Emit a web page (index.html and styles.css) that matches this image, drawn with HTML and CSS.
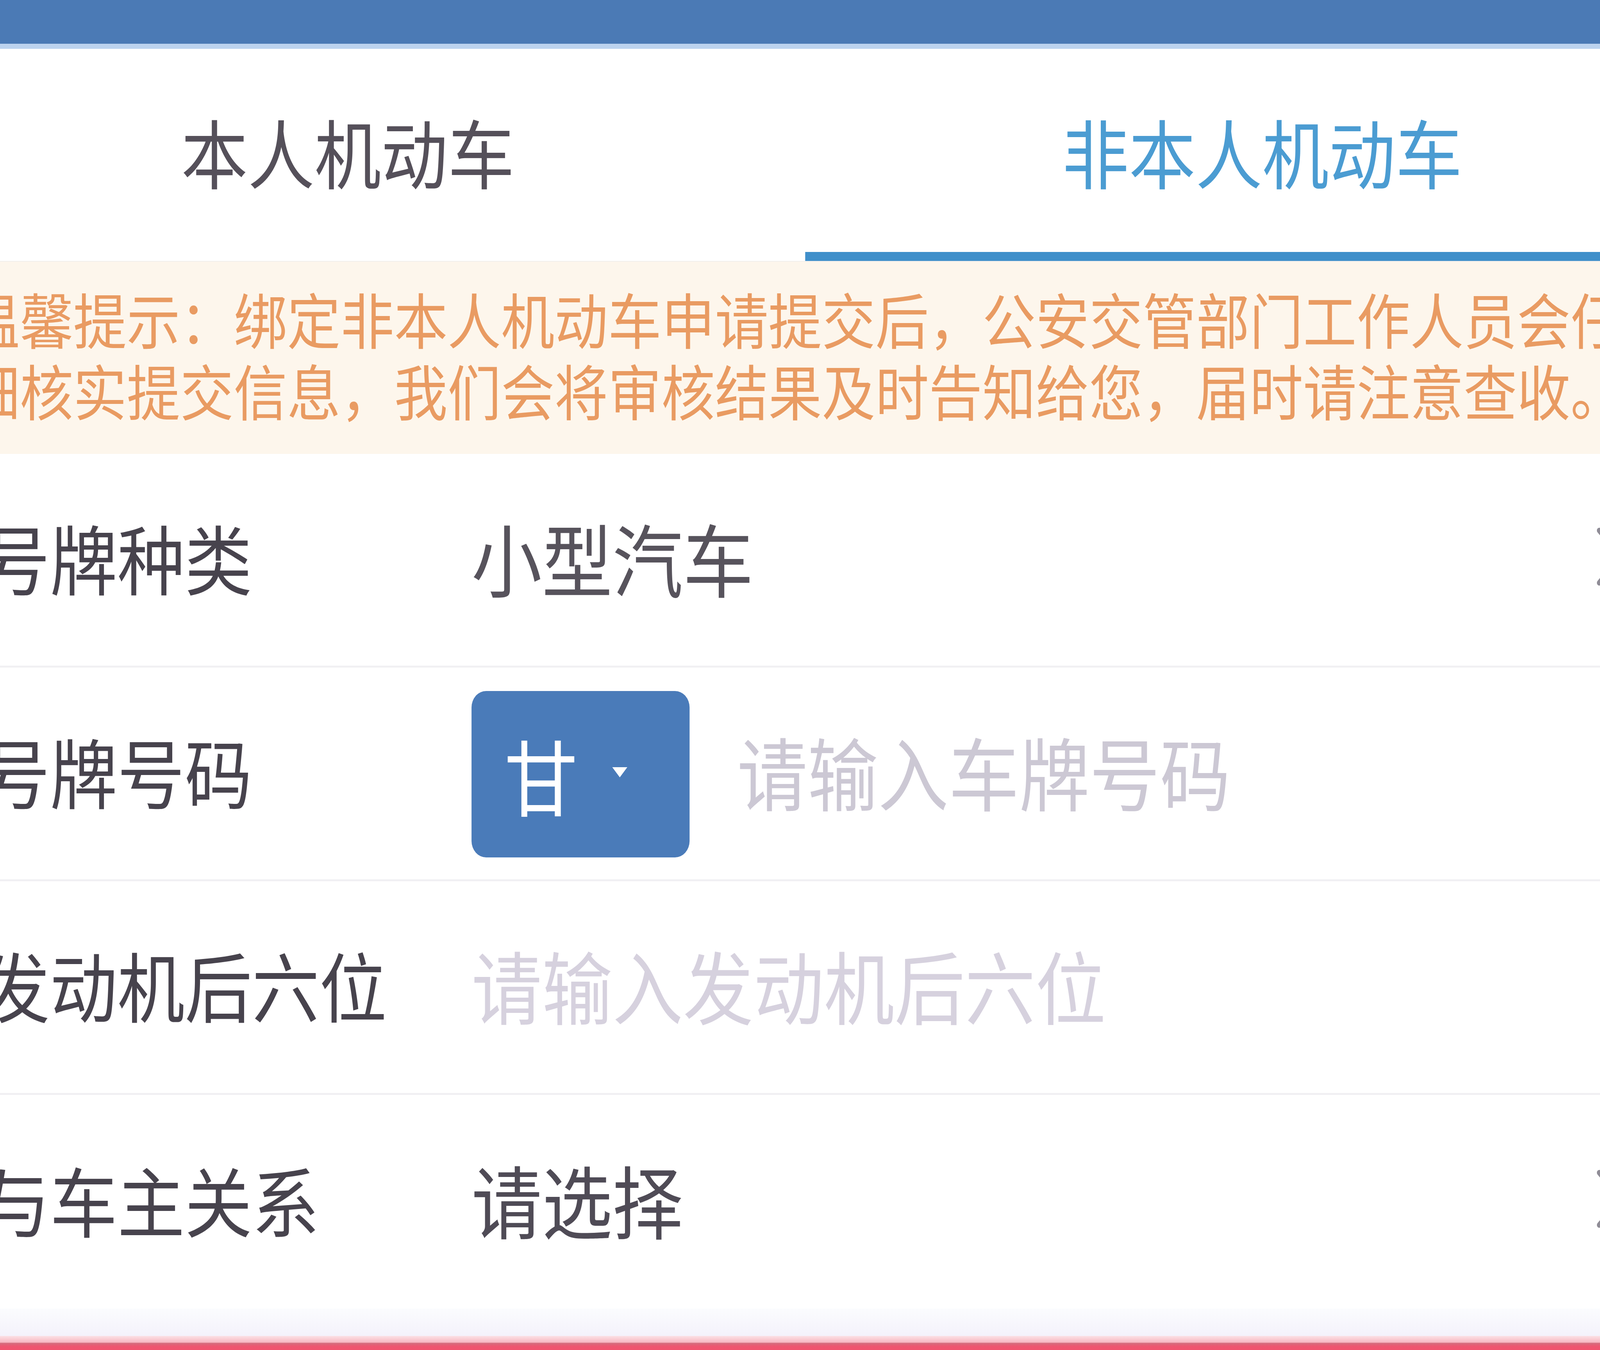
FILE: index.html
```html
<!DOCTYPE html>
<html lang="zh-CN">
<head>
<meta charset="utf-8">
<title>绑定机动车</title>
<link rel="stylesheet" href="styles.css">
</head>
<body>
<div class="screen">
  <div class="frame">
    <div class="app">
      <header class="topbar"></header>
      <nav class="tabs">
        <div class="tab">本人机动车</div>
        <div class="tab active">非本人机动车</div>
      </nav>
      <div class="notice">温馨提示：绑定非本人机动车申请提交后，公安交管部门工作人员会仔细核实提交信息，我们会将审核结果及时告知给您，届时请注意查收。</div>
      <div class="form">
        <div class="row">
          <div class="label">号牌种类</div>
          <div class="value">小型汽车</div>
          <svg class="chev" viewBox="0 0 80 150"><path d="M8 8 L70 75 L8 142" fill="none" stroke="#8f8c96" stroke-width="14" stroke-linecap="round" stroke-linejoin="round"/></svg>
        </div>
        <div class="row">
          <div class="label">号牌号码</div>
          <div class="value plate">
            <div class="prov">
              <span class="prov-name">甘</span>
              <svg class="caret" viewBox="0 0 50 30"><path d="M0 0 H50 L25 30 Z" fill="#ffffff"/></svg>
            </div>
            <span class="ph">请输入车牌号码</span>
          </div>
          <span class="chev-space"></span>
        </div>
        <div class="row">
          <div class="label">发动机后六位</div>
          <div class="value ph light">请输入发动机后六位</div>
          <span class="chev-space"></span>
        </div>
        <div class="row">
          <div class="label">与车主关系</div>
          <div class="value select">请选择</div>
          <svg class="chev" viewBox="0 0 80 150"><path d="M8 8 L70 75 L8 142" fill="none" stroke="#8f8c96" stroke-width="14" stroke-linecap="round" stroke-linejoin="round"/></svg>
        </div>
      </div>
      <div class="gap"></div>
      <div class="bottom-edge"></div>
    </div>
  </div>
</div>
</body>
</html>
```

FILE: styles.css
```css
html, body {
  margin: 0;
  padding: 0;
  background: #ffffff;
}

/* the visible window */
.screen {
  width: 100vw;
  height: 100vh;
  overflow: hidden;
  background: #ffffff;
}

.frame {
  width: 4608px;
  height: 3456px;
  overflow: hidden;
  transform-origin: 0 0;
}

@media (max-width: 4599px) {
  .frame {
    transform: scaleX(0.888889);
  }
}

.app {
  width: 5267px;
  margin-left: -315px;
  font-family: "Noto Sans CJK SC", "Noto Sans", sans-serif;
  display: flex;
  flex-direction: column;
}

.topbar {
  height: 112px;
  background: #4b7ab5;
  border-bottom: 13px solid #bcd3ef;
}

.tabs {
  display: flex;
  height: 545px;
  box-sizing: border-box;
  border-bottom: 2px solid #f1eeec;
  background: #ffffff;
}

.tab {
  flex: 1;
  display: flex;
  align-items: center;
  justify-content: center;
  border-bottom: 23px solid transparent;
  font-size: 192px;
  line-height: 1;
  color: #55505a;
}

.tab.active {
  color: #4b9cd2;
  border-bottom-color: #3f8fca;
}

.notice {
  background: #fdf6ec;
  color: #e99b62;
  font-size: 154px;
  line-height: 183px;
  padding: 52px 218px 74px 218px;
}

.form {
  display: flex;
  flex-direction: column;
  background: #ffffff;
}

.row {
  height: 547px;
  box-sizing: border-box;
  display: grid;
  grid-template-columns: 1408px 1fr 80px;
  align-items: center;
  padding: 0 274px 16px 265px;
  border-bottom: 5px solid #f1f0f3;
}

.row:last-child {
  border-bottom: none;
}

.label {
  font-size: 194px;
  line-height: 1;
  color: #47434d;
}

.value {
  font-size: 203px;
  line-height: 1;
  color: #57535c;
}

.value.select {
  color: #4f4b56;
}

.ph {
  color: #ccc8d4;
}

.ph.light {
  color: #d6d1de;
}

.plate {
  display: flex;
  align-items: center;
}

.prov {
  width: 628px;
  height: 426px;
  box-sizing: border-box;
  background: #4a7bb9;
  border-radius: 42px;
  display: flex;
  align-items: center;
  padding-left: 94px;
  margin-top: 20px;
}

.prov-name {
  font-size: 212px;
  line-height: 1;
  color: #ffffff;
}

.caret {
  width: 44px;
  height: 26px;
  margin-left: 99px;
  margin-top: -10px;
}

.plate .ph {
  margin-left: 137px;
}

.chev {
  width: 80px;
  height: 150px;
}

.chev-space {
  width: 80px;
}

.gap {
  height: 70px;
  background: linear-gradient(#fbfcfe, #f4f2fb);
}

.bottom-edge {
  height: 36px;
  background: linear-gradient(#fbe1e5 0%, #f8b8c2 45%, #d46c7c 52%, #ef566f 75%, #f0546d 100%);
}
```
